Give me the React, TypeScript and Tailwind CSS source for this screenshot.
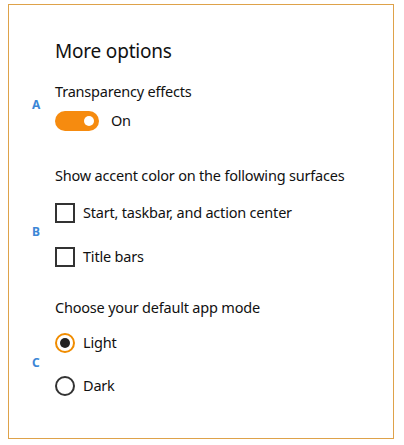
const font = { fontFamily: '"Noto Sans", "Open Sans", sans-serif' }

function Letter({ children, shift }: { children: string; shift?: string }) {
  return (
    <div
      className={`flex w-[46px] shrink-0 items-center pl-[23px] text-[12px] font-bold text-[#3b86d6] ${shift ?? ""}`}
    >
      {children}
    </div>
  )
}

function Checkbox({ label }: { label: string }) {
  return (
    <div className="flex h-[20px] items-center gap-[8px]">
      <span className="h-[20px] w-[20px] border-2 border-[#333333]" />
      <span className="text-[14.5px] tracking-[-0.2px] text-[#111111]">{label}</span>
    </div>
  )
}

function Radio({ label, checked }: { label: string; checked?: boolean }) {
  return (
    <div className="flex h-[20px] items-center gap-[8px]">
      <span
        className={
          checked
            ? "flex h-[20px] w-[20px] items-center justify-center rounded-full border-2 border-[#f08c00]"
            : "flex h-[20px] w-[20px] items-center justify-center rounded-full border-2 border-[#333333]"
        }
      >
        {checked && <span className="h-[10px] w-[10px] rounded-full bg-[#222222]" />}
      </span>
      <span className="text-[14.5px] tracking-[-0.2px] text-[#111111]">{label}</span>
    </div>
  )
}

export default function App() {
  return (
    <div className="h-[445px] w-[404px] bg-white pl-[8px] pt-[4px]" style={font}>
      <div className="flex h-[435px] w-[386px] flex-col border border-[#dea24a]">
        <h1 className="ml-[46px] mt-[32px] text-[19px] leading-[28px] tracking-[-0.2px] text-[#111111]">
          More options
        </h1>

        <div className="mt-[15px] flex">
          <Letter shift="pb-[1px]">A</Letter>
          <div className="flex flex-col">
            <p className="text-[14.5px] leading-[22px] tracking-[-0.2px] text-[#111111]">
              Transparency effects
            </p>
            <div className="mt-[8px] flex items-center gap-[12px]">
              <span className="flex h-[20px] w-[44px] items-center justify-end rounded-full bg-[#f68b0f] pr-[5px]">
                <span className="h-[10px] w-[10px] rounded-full bg-white" />
              </span>
              <span className="text-[14.5px] tracking-[-0.2px] text-[#111111]">On</span>
            </div>
          </div>
        </div>

        <p className="ml-[46px] mt-[32px] text-[14.5px] leading-[22px] tracking-[-0.2px] text-[#111111]">
          Show accent color on the following surfaces
        </p>
        <div className="mt-[17px] flex">
          <Letter shift="pb-[6px]">B</Letter>
          <div className="flex flex-col gap-[24px]">
            <Checkbox label="Start, taskbar, and action center" />
            <Checkbox label="Title bars" />
          </div>
        </div>

        <p className="ml-[46px] mt-[29px] text-[14.5px] leading-[22px] tracking-[-0.2px] text-[#111111]">
          Choose your default app mode
        </p>
        <div className="mt-[15px] flex">
          <Letter shift="pb-[2px]">C</Letter>
          <div className="flex flex-col gap-[23px]">
            <Radio label="Light" checked />
            <Radio label="Dark" />
          </div>
        </div>
      </div>
    </div>
  )
}
